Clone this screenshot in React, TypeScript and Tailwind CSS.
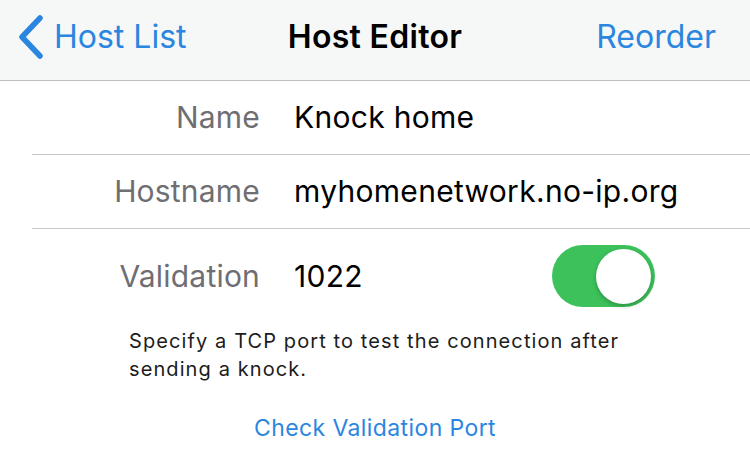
import React from 'react'

const font = { fontFamily: 'Inter, "Noto Sans", sans-serif' }

const Row = ({ label, children, className }: { label: string; children: React.ReactNode; className?: string }) => (
  <div className={`flex items-center ${className ?? ''}`}>
    <div className="w-[260px] shrink-0 text-right text-[30px] text-[#6e6e73] tracking-[0.2px]">{label}</div>
    <div className="ml-[34px] flex flex-1 items-center text-[30px] text-black tracking-[0.3px]">{children}</div>
  </div>
)

export default function App() {
  return (
    <div style={font} className="w-[750px] h-[470px] bg-white overflow-hidden">
      <div className="relative flex h-[81px] items-center border-b border-[#b9bfc2] bg-[#f6f8f8]">
        <div className="flex items-center pl-[17px] text-[32px] text-[#2b86e0]">
          <svg width="28" height="44" viewBox="0 0 28 44" className="mt-[-6px]">
            <path d="M23 3 L5 22 L23 41" fill="none" stroke="#2b86e0" strokeWidth="5.5" strokeLinecap="round" strokeLinejoin="round" />
          </svg>
          <span className="ml-[9px] mt-[-6px]">Host List</span>
        </div>
        <div className="absolute left-0 right-0 top-0 flex h-full items-center justify-center pointer-events-none">
          <span className="mt-[-6px] text-[32px] font-semibold tracking-[0.3px] text-black">Host Editor</span>
        </div>
        <div className="ml-auto pr-[34px] mt-[-6px] text-[32px] text-[#2b86e0]">Reorder</div>
      </div>

      <Row label="Name" className="h-[73px]">Knock home</Row>
      <div className="ml-[32px] h-px bg-[#c3c6c8]" />
      <Row label="Hostname" className="h-[73px]">myhomenetwork.no-ip.org</Row>
      <div className="ml-[32px] h-px bg-[#c3c9cc]" />
      <Row label="Validation" className="h-[94px]">
        <span>1022</span>
        <div className="ml-auto mr-[95px] flex h-[62px] w-[103px] items-center justify-end rounded-full bg-[#3cc15b] pr-[4px]">
          <div className="h-[55px] w-[55px] rounded-full bg-white shadow-[0_2px_4px_rgba(0,0,0,0.25)]" />
        </div>
      </Row>

      <div className="pl-[129px] pr-[100px] pt-[4px] text-[20px] leading-[28px] tracking-[1.1px] text-[#1c1c1c]">
        Specify a TCP port to test the connection after sending a knock.
      </div>
      <div className="mt-[28px] text-center text-[23px] tracking-[0.4px] text-[#2b86e0]">Check Validation Port</div>
    </div>
  )
}
